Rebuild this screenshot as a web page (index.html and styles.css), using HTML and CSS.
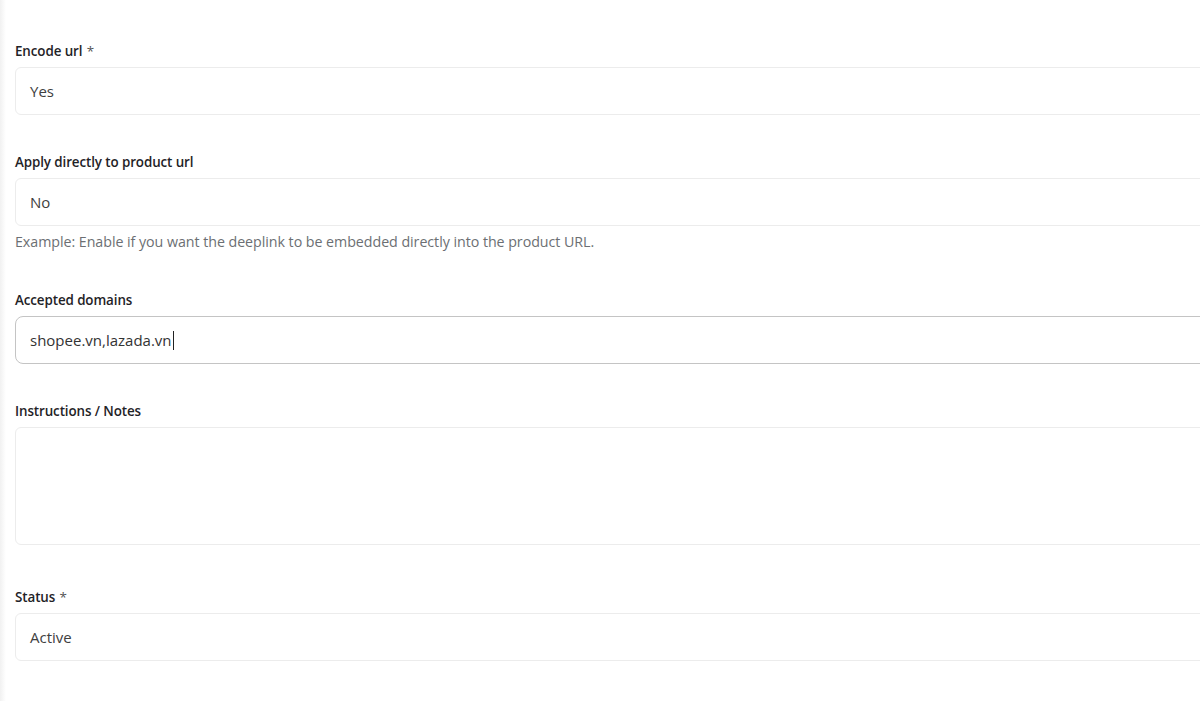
FILE: index.html
```html
<!DOCTYPE html>
<html>
<head>
<meta charset="utf-8">
<link rel="stylesheet" href="styles.css">
</head>
<body>
<div class="page">
  <form class="form">
    <div class="field">
      <label class="label">Encode url <span class="req">*</span></label>
      <div class="control">Yes</div>
    </div>
    <div class="field field-help">
      <label class="label">Apply directly to product url</label>
      <div class="control">No</div>
      <div class="help">Example: Enable if you want the deeplink to be embedded directly into the product URL.</div>
    </div>
    <div class="field">
      <label class="label">Accepted domains</label>
      <div class="control focused">shopee.vn,lazada.vn<span class="caret"></span></div>
    </div>
    <div class="field field-area">
      <label class="label">Instructions / Notes</label>
      <div class="control area"></div>
    </div>
    <div class="field">
      <label class="label">Status <span class="req">*</span></label>
      <div class="control">Active</div>
    </div>
  </form>
</div>
</body>
</html>
```
FILE: styles.css
```css
html, body {
  margin: 0;
  padding: 0;
  height: 100%;
  overflow: hidden;
}
body {
  background: linear-gradient(to right, #f1f1f1 0, #f8f8f8 3px, #ffffff 6px);
  font-family: "Open Sans", "Noto Sans", sans-serif;
  color: #212529;
}
.page {
  padding: 41px 0 0 15px;
}
.form {
  width: 1200px;
  display: flex;
  flex-direction: column;
}
.field {
  display: flex;
  flex-direction: column;
  margin-bottom: 37px;
}
.field-help {
  margin-bottom: 39px;
}
.field-area {
  margin-bottom: 42px;
}
.label {
  font-size: 13.4px;
  font-weight: 600;
  line-height: 20px;
  margin-bottom: 6px;
  color: #1f2327;
  letter-spacing: -0.1px;
}
.req {
  font-weight: 400;
  color: #555;
  margin-left: 1px;
}
.control {
  box-sizing: border-box;
  height: 48px;
  border: 1px solid #ececec;
  border-radius: 6px;
  padding: 0 14px;
  display: flex;
  align-items: center;
  font-size: 15px;
  color: #404040;
  background: #fff;
}
.control.focused {
  border-color: #c4c4c4;
  border-radius: 8px;
  color: #333;
}
.control.area {
  height: 118px;
}
.caret {
  display: inline-block;
  width: 1px;
  height: 19px;
  background: #222;
  margin-left: 1px;
}
.help {
  margin-top: 7px;
  font-size: 14.25px;
  line-height: 18px;
  color: #6c6f73;
  letter-spacing: -0.05px;
}
```
